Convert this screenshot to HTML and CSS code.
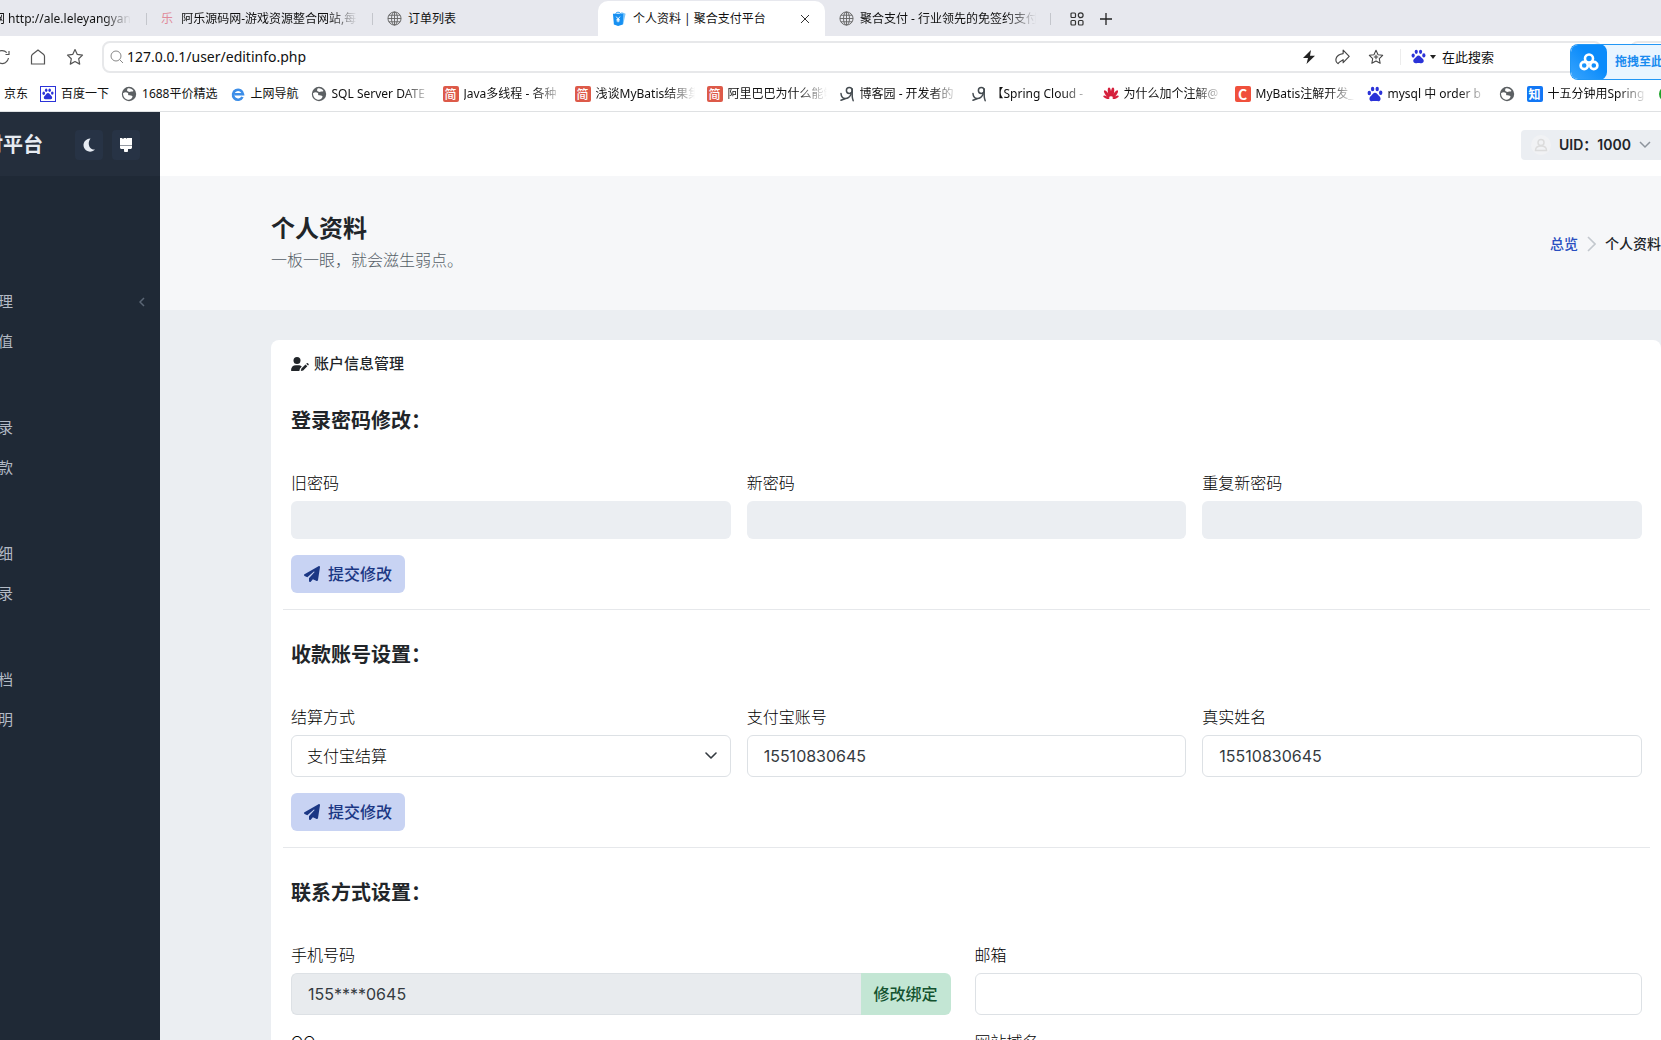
FILE: index.html
```html
<!DOCTYPE html>
<html lang="zh-CN">
<head>
<meta charset="utf-8">
<meta name="viewport" content="width=device-width, initial-scale=1">
<title>个人资料 | 聚合支付平台</title>
<link rel="stylesheet" href="styles.css">
</head>
<body>
<svg class="defs" aria-hidden="true">
  <symbol id="globe" viewBox="0 0 16 16"><g fill="none" stroke="#666" stroke-width="1"><circle cx="8" cy="8" r="7"/><ellipse cx="8" cy="8" rx="3.2" ry="7"/><path d="M8 1v14M1 8h14M2 4.5h12M2 11.5h12"/></g></symbol>
  <symbol id="earth" viewBox="0 0 16 16"><circle cx="8" cy="8" r="7.200" fill="#5c6063"/><path d="M2 7.200C3.500 6.200 5.500 6 7 7c.6 1-.4 1.800.6 2.300 1.500.3 3.200-.2 3.900 1 .2 1.500-1.500 3-3.500 3.500C4.500 13.800 2 11 2 7.200zM6.500 2.600c2-.7 4.700.2 6 2.300-1.200.8-2.300.3-3 .9-1.300.4-3-.3-3.500-1.500z" fill="#fff"/></symbol>
  <symbol id="paw" viewBox="0 0 16 16"><g fill="currentColor"><ellipse cx="2.300" cy="7" rx="1.700" ry="2.200"/><ellipse cx="5.600" cy="3" rx="1.700" ry="2.300"/><ellipse cx="10.200" cy="3" rx="1.700" ry="2.300"/><ellipse cx="13.700" cy="6.800" rx="1.700" ry="2.200"/><path d="M8 6.800c1.800 0 2.400 1.600 3.600 2.800 1.300 1.200 2.300 2.100 1.900 3.800-.4 1.700-2 1.900-3.300 1.700-1.500-.3-2.900-.3-4.400 0-1.300.2-2.900 0-3.300-1.700-.4-1.700.6-2.600 1.900-3.800C5.600 8.400 6.200 6.800 8 6.800z"/></g></symbol>
  <symbol id="cnblogs" viewBox="0 0 16 16"><g fill="none" stroke="#444b50" stroke-width="1.500" stroke-linecap="round"><path d="M2 7.500c.2 3 1.500 4.800 4 5 3 .1 5-1.700 6.200-4.500"/><circle cx="10.300" cy="4.500" r="2.900"/><path d="M13.200 3v6.500c0 2 .3 3.700 1 5.200M2 14.300l4-1.500"/></g></symbol>
  <symbol id="plane" viewBox="0 0 512 512"><path fill="currentColor" d="M498.100 5.600c10.100 7 15.400 19.100 13.500 31.200l-64 416c-1.500 9.700-7.400 18.200-16 23s-18.900 5.400-28 1.600L284 427.700l-68.500 74.100c-8.900 9.700-22.900 12.900-35.200 8.100S160 493.200 160 480v-83.600c0-4 1.500-7.800 4.200-10.800l167.600-182.800c5.800-6.300 5.600-16-.4-22s-15.700-6.400-22-.7L106 360.800l-88.300-44.200C7.100 311.300.3 300.700 0 288.900s5.900-22.800 16.100-28.700l448-256c10.700-6.100 23.900-5.500 34 1.400z"/></symbol>
</svg>

<header class="browser">
  <nav class="tabs" aria-label="标签页">
    <a class="tab tab-first" href="#"><span class="fade">网 http://ale.leleyangyan</span></a>
    <a class="tab" href="#"><b class="fav-le">乐</b><span class="fade">阿乐源码网-游戏资源整合网站,每日</span></a>
    <a class="tab tab-plain" href="#"><svg class="fav"><use href="#globe"/></svg><span>订单列表</span></a>
    <div class="tab tab-active">
      <svg class="fav" viewBox="0 0 16 16"><path d="M10 1l4.500 2-2.500 11H8z" fill="#7cc6fb"/><path d="M1 3h11l-.5 11.500L6.500 16 2 14.500z" fill="#1690f2"/><path d="M4 3C4 .8 9 .8 9 3" stroke="#1690f2" fill="none"/><path d="M4.500 6l2 2.500L8.500 6M6.500 8.500V12M4.800 9h3.400M4.800 10.500h3.400" stroke="#fff" fill="none"/></svg>
      <span>个人资料 | 聚合支付平台</span>
      <button class="icon-btn tab-close" aria-label="关闭"><svg width="10" height="10" viewBox="0 0 10 10"><path d="M1 1l8 8M9 1L1 9" stroke="#333" fill="none"/></svg></button>
    </div>
    <a class="tab" href="#"><svg class="fav"><use href="#globe"/></svg><span class="fade">聚合支付 - 行业领先的免签约支付</span></a>
    <div class="tab-tools">
      <button class="icon-btn" aria-label="标签管理"><svg width="14" height="14" viewBox="0 0 14 14"><g fill="none" stroke="#333" stroke-width="1.200"><rect x="1" y="1" width="4.500" height="4.500" rx="1"/><circle cx="10.700" cy="3.300" r="2.400"/><rect x="1" y="8.500" width="4.500" height="4.500" rx="1"/><rect x="8.500" y="8.500" width="4.500" height="4.500" rx="1"/></g></svg></button>
      <button class="icon-btn" aria-label="新建标签页"><svg width="12" height="12" viewBox="0 0 12 12"><path d="M6 0v12M0 6h12" stroke="#222" stroke-width="1.300"/></svg></button>
    </div>
  </nav>

  <div class="address-row">
    <div class="nav-tools">
      <button class="icon-btn reload" aria-label="刷新"><svg width="16" height="16" viewBox="0 0 16 16"><path d="M14.500 9A6.500 6.500 0 1 1 12.800 3.600M15 2v3.500h-3.500" fill="none" stroke="#555" stroke-width="1.200"/></svg></button>
      <button class="icon-btn" aria-label="主页"><svg width="16" height="16" viewBox="0 0 16 16"><path d="M1.500 7.300C1.500 6.500 2 5.700 2.600 5.200L8 1l5.400 4.200c.6.500 1.100 1.300 1.100 2.100V15h-13z" fill="none" stroke="#555" stroke-width="1.200"/></svg></button>
      <button class="icon-btn" aria-label="收藏"><svg width="18" height="18" viewBox="0 0 18 18"><path d="M9 1.500l2.300 4.900 5.200.7-3.800 3.700 1 5.300L9 13.500l-4.700 2.600 1-5.300L1.500 7.100l5.200-.7z" fill="none" stroke="#555" stroke-width="1.200" stroke-linejoin="round"/></svg></button>
    </div>
    <div class="url-box">
      <svg width="14" height="14" viewBox="0 0 14 14"><circle cx="6" cy="6" r="5" fill="none" stroke="#888"/><path d="M9.700 9.700L13 13" stroke="#888"/></svg>
      <input class="url" type="text" value="127.0.0.1/user/editinfo.php" aria-label="地址">
      <div class="url-tools">
        <button class="icon-btn" aria-label="极速"><svg width="14" height="14" viewBox="0 0 14 14"><path d="M9 0L1 8h5l-1.500 6L13 5.800H8z" fill="#222"/></svg></button>
        <button class="icon-btn" aria-label="分享"><svg width="16" height="16" viewBox="0 0 14 14"><path d="M8 1l5.300 5.500L8 12V9.300C7 10.300 5 10.500 3.500 12.800.7 11 .5 5 8 4z" fill="none" stroke="#444" stroke-width="1" stroke-linejoin="round"/></svg></button>
        <button class="icon-btn" aria-label="添加收藏"><svg width="16" height="16" viewBox="0 0 18 18"><path d="M9 1.500l2.300 4.900 5.200.7-3.800 3.700 1 5.300L9 13.500l-4.700 2.600 1-5.300L1.500 7.100l5.200-.7zM9 6.500v5M6.500 9h5" fill="none" stroke="#444" stroke-width="1.200" stroke-linejoin="round"/></svg></button>
      </div>
      <div class="search">
        <svg class="paw" width="15" height="15"><use href="#paw"/></svg>
        <svg width="6" height="4" viewBox="0 0 6 4"><path d="M0 0h6L3 4z" fill="#222"/></svg>
        <span>在此搜索</span>
      </div>
    </div>
    <div class="ext-box"></div>
  </div>

  <nav class="bookmarks" aria-label="书签">
    <a href="#"><span>京东</span></a>
    <a href="#"><span class="bm-icon boxed"><svg width="12" height="12"><use href="#paw"/></svg></span><span>百度一下</span></a>
    <a href="#"><svg class="bm-icon"><use href="#earth"/></svg><span>1688平价精选</span></a>
    <a href="#"><svg class="bm-icon" viewBox="0 0 16 16"><path d="M12.500 11A5 5 0 1 1 13 8.300H4.500" fill="none" stroke="#3d8ee8" stroke-width="2.600"/></svg><span>上网导航</span></a>
    <a href="#"><svg class="bm-icon"><use href="#earth"/></svg><span class="fade">SQL Server DATE</span></a>
    <a href="#"><b class="bm-icon jian">简</b><span class="fade">Java多线程 - 各种</span></a>
    <a href="#"><b class="bm-icon jian">简</b><span class="fade">浅谈MyBatis结果集</span></a>
    <a href="#"><b class="bm-icon jian">简</b><span class="fade">阿里巴巴为什么能够</span></a>
    <a href="#"><svg class="bm-icon"><use href="#cnblogs"/></svg><span class="fade">博客园 - 开发者的</span></a>
    <a href="#"><svg class="bm-icon"><use href="#cnblogs"/></svg><span class="fade">【Spring Cloud -</span></a>
    <a href="#"><svg class="bm-icon" viewBox="0 0 16 16"><g fill="#d5203c"><ellipse cx="6.500" cy="6" rx="1.600" ry="4.600" transform="rotate(-8 6.500 6)"/><ellipse cx="9.500" cy="6" rx="1.600" ry="4.600" transform="rotate(8 9.500 6)"/><ellipse cx="3.800" cy="8" rx="1.500" ry="4.300" transform="rotate(-36 3.800 8)"/><ellipse cx="12.200" cy="8" rx="1.500" ry="4.300" transform="rotate(36 12.200 8)"/><ellipse cx="3.300" cy="11.300" rx="1.200" ry="3.300" transform="rotate(-68 3.300 11.300)"/><ellipse cx="12.700" cy="11.300" rx="1.200" ry="3.300" transform="rotate(68 12.700 11.300)"/></g></svg><span class="fade">为什么加个注解@</span></a>
    <a href="#"><b class="bm-icon csdn">C</b><span class="fade">MyBatis注解开发_</span></a>
    <a href="#"><svg class="bm-icon paw"><use href="#paw"/></svg><span class="fade">mysql 中 order b</span></a>
    <a href="#" aria-label="书签"><svg class="bm-icon"><use href="#earth"/></svg></a>
    <a href="#"><b class="bm-icon zhi">知</b><span class="fade">十五分钟用Spring</span></a>
    <a href="#" aria-label="书签"><i class="bm-icon dot"></i></a>
  </nav>

  <div class="drop-tip">
    <span class="drop-logo"><svg width="22" height="20" viewBox="0 0 22 20"><g fill="none" stroke="#fff" stroke-width="2.600"><circle cx="11" cy="6.500" r="4"/><circle cx="6.200" cy="13.500" r="3.600"/><circle cx="15.800" cy="13.500" r="3.600"/></g></svg></span>
    <b>拖拽至此</b>
  </div>
</header>

<div class="app">
  <aside class="sidebar">
    <div class="side-head">
      <strong class="brand">付平台</strong>
      <button class="side-btn" aria-label="夜间模式"><svg width="14" height="14" viewBox="0 0 14 14"><path d="M8.500.5A6.600 6.600 0 1 0 13 11.500C8 12.500 4.500 6 8.500.5z" fill="#e6ebf2"/></svg></button>
      <button class="side-btn" aria-label="主题"><svg width="12" height="14" viewBox="0 0 12 14"><path d="M0 0h2l1 1 1-1h2v1l1-1h5v7.500H0zM0 8h12v1.500c0 .8-.7 1.500-1.500 1.500H8v1.500a2 2 0 0 1-4 0V11H1.500C.7 11 0 10.300 0 9.500z" fill="#fff"/></svg></button>
    </div>
    <nav class="menu">
      <ul>
        <li><a href="#">理<svg width="6" height="10" viewBox="0 0 6 10"><path d="M5 1L1 5l4 4" fill="none" stroke="#5b6675" stroke-width="1.500"/></svg></a></li>
        <li><a href="#">值</a></li>
      </ul>
      <ul>
        <li><a href="#">录</a></li>
        <li><a href="#">款</a></li>
      </ul>
      <ul>
        <li><a href="#">细</a></li>
        <li><a href="#">录</a></li>
      </ul>
      <ul>
        <li><a href="#">档</a></li>
        <li><a href="#">明</a></li>
      </ul>
    </nav>
  </aside>

  <div class="page">
    <div class="topbar">
      <button class="user">
        <svg width="20" height="20" viewBox="0 0 20 20"><circle cx="10" cy="10" r="10" fill="#f1f2f4"/><g fill="none" stroke="#dcdcdc" stroke-width="1.500"><circle cx="10" cy="7.500" r="3"/><path d="M4.500 15.500c0-3 2-4.500 5.500-4.500s5.500 1.500 5.500 4.500z"/></g></svg>
        <span>UID：1000</span>
        <svg width="12" height="8" viewBox="0 0 12 8"><path d="M1 1l5 5 5-5" fill="none" stroke="#8d949c" stroke-width="1.500"/></svg>
      </button>
    </div>

    <div class="hero">
      <div>
        <h1>个人资料</h1>
        <p>一板一眼，就会滋生弱点。</p>
      </div>
      <nav class="crumbs" aria-label="面包屑">
        <a href="#">总览</a>
        <svg width="9" height="16" viewBox="0 0 9 16"><path d="M1 1l7 7-7 7" fill="none" stroke="#c3c8ce" stroke-width="1.600"/></svg>
        <span>个人资料</span>
      </nav>
    </div>

    <main class="content">
      <div class="card">
        <h2 class="card-head">
          <svg width="18" height="14" viewBox="0 0 18 14"><g fill="#212529"><circle cx="6" cy="3.500" r="3.500"/><path d="M0 13.500C0 10 2 8.200 5 8.200h2c1.600 0 2.900.5 3.800 1.400L9 11.500l-.7 2.500H.5zM9.800 14l.6-2.400 4.100-4.100 1.800 1.800-4.100 4.100zM15.200 6.800l.6-.6c.8-.7 2.400.9 1.800 1.700l-.6.6z"/></g></svg>
          账户信息管理
        </h2>

        <form class="section section-first">
          <h3>登录密码修改：</h3>
          <div class="cols">
            <div class="field"><label for="old">旧密码</label><input class="flat" id="old" type="password"></div>
            <div class="field"><label for="new">新密码</label><input class="flat" id="new" type="password"></div>
            <div class="field"><label for="again">重复新密码</label><input class="flat" id="again" type="password"></div>
          </div>
          <button class="submit" type="button"><svg width="16" height="16"><use href="#plane"/></svg>提交修改</button>
        </form>

        <form class="section">
          <h3>收款账号设置：</h3>
          <div class="cols">
            <div class="field"><label for="way">结算方式</label>
              <div class="select">
                <select id="way"><option>支付宝结算</option></select>
                <svg width="12" height="8" viewBox="0 0 12 8"><path d="M1 1l5 5 5-5" fill="none" stroke="#343a40" stroke-width="1.600" stroke-linecap="round" stroke-linejoin="round"/></svg>
              </div>
            </div>
            <div class="field"><label for="account">支付宝账号</label><input id="account" type="text" value="15510830645"></div>
            <div class="field"><label for="name">真实姓名</label><input id="name" type="text" value="15510830645"></div>
          </div>
          <button class="submit" type="button"><svg width="16" height="16"><use href="#plane"/></svg>提交修改</button>
        </form>

        <form class="section">
          <h3>联系方式设置：</h3>
          <div class="cols cols-two">
            <div class="field field-group"><label for="phone">手机号码</label>
              <div class="group">
                <input id="phone" type="text" value="155****0645" disabled>
                <button class="bind" type="button">修改绑定</button>
              </div>
            </div>
            <div class="field"><label for="mail">邮箱</label><input id="mail" type="email"></div>
            <div class="field"><label for="qq">QQ</label><input id="qq" type="text"></div>
            <div class="field"><label for="site">网站域名</label><input id="site" type="text"></div>
          </div>
        </form>
      </div>
    </main>
  </div>
</div>
</body>
</html>
```

FILE: styles.css
```css
* { box-sizing: border-box; }

body {
  margin: 0;
  height: 100vh;
  overflow: hidden;
  display: flex;
  flex-direction: column;
  font: 400 16px/24px Inter, "Noto Sans CJK SC", sans-serif;
  color: #212529;
  background: #ebeef2;
}

h1, h2, h3, p, ul { margin: 0; padding: 0; }
ul { list-style: none; }
a { color: inherit; text-decoration: none; }
button, input, select { font: inherit; color: inherit; margin: 0; }
button { border: 0; padding: 0; cursor: pointer; }
svg { flex: none; display: block; }
.defs { position: absolute; width: 0; height: 0; }
.icon-btn { background: none; display: flex; }

/* browser frame */
.browser {
  flex: none;
  position: relative;
  overflow: hidden;
  background: #fff;
  border-bottom: 1px solid #dfe1e3;
  font: 400 12px/16px "Noto Sans", "Noto Sans CJK SC", sans-serif;
  color: #111;
  white-space: nowrap;
}

.fade {
  overflow: hidden;
  -webkit-mask-image: linear-gradient(to left, transparent, #000 28px);
  mask-image: linear-gradient(to left, transparent, #000 28px);
}

.tabs { display: flex; height: 36px; padding-top: 1px; background: #e7e8ee; }
.tab {
  flex: none;
  width: 226px;
  display: flex;
  align-items: center;
  gap: 6px;
  padding: 0 15px 0 14px;
  background: linear-gradient(#c4c6cc, #c4c6cc) right center / 1px 12px no-repeat;
}
.tab-first { width: 147px; padding: 0 16px 0 0; }
.tab-first .fade { margin-left: -7px; }
.tab-plain { width: 225px; background: none; }
.tab-active { width: 227px; background: #fff; border-radius: 10px 10px 0 0; }
.tab-close { margin-left: auto; }
.fav { width: 15px; height: 15px; }
.fav-le { width: 15px; font-weight: 400; color: #e08a9a; }
.tab-tools { display: flex; align-items: center; gap: 16px; padding-left: 19px; }

.address-row { display: flex; align-items: center; height: 41px; }
.nav-tools { flex: none; width: 102px; display: flex; align-items: center; gap: 20px; }
.reload { margin-left: -6px; }
.url-box {
  flex: 1;
  height: 32px;
  display: flex;
  align-items: center;
  gap: 3px;
  padding-left: 6px;
  border: 2px solid #e7e8ea;
  border-radius: 8px;
}
.url { flex: 1; min-width: 0; border: 0; padding: 0; background: none; font-size: 14px; outline: 0; }
.url-tools { display: flex; align-items: center; gap: 18px; }
.search {
  width: 200px;
  display: flex;
  align-items: center;
  gap: 4px;
  margin-left: 13px;
  padding-left: 10px;
  border-left: 1px solid #ececec;
  font-size: 13px;
}
.search span { padding-left: 2px; }
.paw { color: #2b33d8; }
.ext-box { flex: none; width: 31px; height: 32px; margin-left: 28px; border: 2px solid #e7e8ea; border-right: 0; border-radius: 8px 0 0 8px; }

.bookmarks { display: flex; align-items: center; gap: 12px; height: 34px; padding-left: 4px; }
.bookmarks a { flex: none; display: flex; align-items: center; gap: 5px; }
.bookmarks .fade { width: 99px; }
.bm-icon { width: 16px; height: 16px; display: block; color: #fff; font: 700 12px/16px "Noto Sans CJK SC", sans-serif; text-align: center; border-radius: 2px; }
.boxed { display: grid; place-items: center; border: 1px solid #2b33d8; color: #2b33d8; border-radius: 0; }
.paw.bm-icon { color: #2b33d8; }
.jian { background: #dd5a49; font-weight: 500; }
.csdn { background: #f0503c; font-size: 14px; }
.zhi { background: #1277f5; }
.dot { background: #1fa32b; border-radius: 50%; }

.drop-tip {
  position: absolute;
  top: 44px;
  right: 0;
  width: 91px;
  height: 36px;
  display: flex;
  align-items: center;
  gap: 8px;
  overflow: hidden;
  border: 1px solid #2297f5;
  border-right: 0;
  border-radius: 8px 0 0 8px;
  background: #e9f5ff;
  color: #1b8cf0;
  font-size: 12px;
}
.drop-logo { flex: none; width: 36px; height: 36px; display: grid; place-items: center; border-radius: 8px; background: linear-gradient(45deg, #3aa5fd, #0a8bfb 60%); }

/* application */
.app { flex: 1; min-height: 0; display: flex; }

.sidebar { flex: none; width: 160px; overflow: hidden; background: #1f2936; color: #b3bac5; }
.side-head { display: flex; align-items: center; gap: 9px; height: 64px; padding: 2px 20px 0 0; background: #242e3c; }
.brand { flex: 1; margin-left: -17px; font-size: 20px; color: #e6ebf2; white-space: nowrap; }
.side-btn { flex: none; width: 28px; height: 30px; display: grid; place-items: center; border-radius: 4px; background: #273345; }
.menu { display: flex; flex-direction: column; gap: 46px; padding-top: 106px; }
.menu a { display: flex; align-items: center; justify-content: space-between; height: 40px; margin-left: -2px; padding-right: 15px; font-size: 15px; }

.page { flex: 1; min-width: 0; overflow: hidden; }
.topbar { display: flex; align-items: center; justify-content: flex-end; height: 64px; padding-top: 2px; background: #fff; }
.user { width: 140px; height: 30px; display: flex; align-items: center; gap: 8px; padding-left: 10px; border-radius: 4px 0 0 4px; background: #ebeef2; font-size: 14px; font-weight: 600; white-space: nowrap; }

.hero { display: flex; align-items: center; justify-content: space-between; height: 134px; padding: 2px 0 0 111px; background: #f6f7f9; }
.hero h1 { font-size: 24px; line-height: 32px; font-weight: 700; }
.hero p { line-height: 30px; font-weight: 300; color: #555e67; }
.crumbs { display: flex; align-items: center; gap: 9px; font-size: 14px; font-weight: 500; white-space: nowrap; }
.crumbs a { color: #2a4fc0; }

.content { padding: 30px 0 0 111px; }
.card { border-radius: 8px; background: #fff; }
.card-head { display: flex; align-items: center; gap: 5px; padding: 12px 20px; font-size: 15px; line-height: 24px; font-weight: 500; }

.section { margin: 0 11px 0 12px; padding: 33px 8px 16px; border-top: 1px solid #e6e8eb; }
.section-first { padding-top: 21px; border-top: 0; }
.section h3 { margin-bottom: 39px; font-size: 20px; line-height: 24px; font-weight: 700; }
.cols { display: grid; grid-template-columns: repeat(3, 1fr); gap: 16px; margin-bottom: 16px; }
.cols-two { grid-template-columns: repeat(2, 1fr); }
.field { display: flex; flex-direction: column; gap: 7px; min-width: 0; }
.field-group { padding-right: 8px; }
.field label { line-height: 22px; font-weight: 300; color: #000; }
.field input, .field select {
  width: 100%;
  height: 42px;
  padding: 0 16px;
  border: 1px solid #dde1e5;
  border-radius: 6px;
  background: #fff;
  color: #343a40;
}
.field .flat { height: 38px; border: 0; background: #ebeef2; }
.select { display: grid; align-items: center; }
.select > * { grid-area: 1 / 1; }
.field select { appearance: none; padding: 0 15px; font-weight: 300; color: #000; }
.select svg { justify-self: end; margin-right: 14px; pointer-events: none; }
.group { display: flex; }
.group input { flex: 1; border-right: 0; border-radius: 6px 0 0 6px; background: #e8ebee; }
.bind { flex: none; width: 90px; border-radius: 0 6px 6px 0; background: #c3e6d4; color: #14532f; font-weight: 500; }
.submit { display: flex; align-items: center; gap: 8px; height: 38px; padding: 0 13px; border-radius: 6px; background: #c8d3f3; color: #1b3784; font-weight: 500; }
```
